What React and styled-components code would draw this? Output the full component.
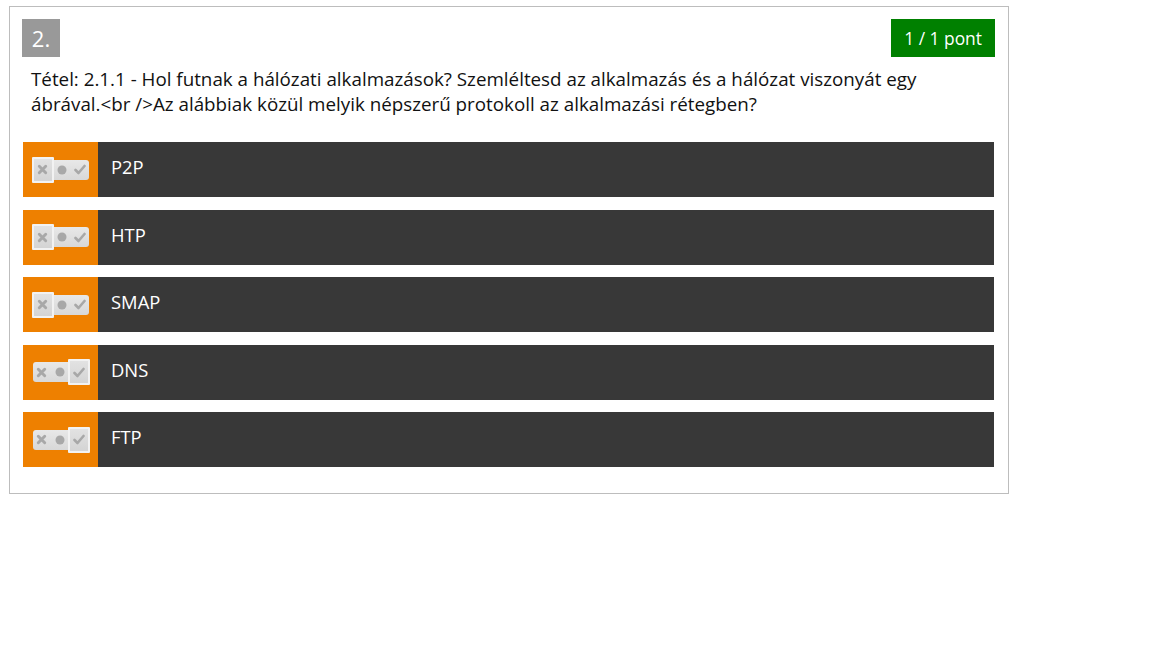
import React from "react";
import styled, { createGlobalStyle } from "styled-components";

const GlobalStyle = createGlobalStyle`
  body {
    margin: 0;
    background: #ffffff;
    font-family: "Open Sans", "Liberation Sans", sans-serif;
  }
`;

const Page = styled.div`
  padding: 6px 9px;
`;

const Card = styled.div`
  box-sizing: border-box;
  width: 1000px;
  height: 488px;
  border: 1px solid #bdbdbd;
  padding: 12px;
`;

const Header = styled.div`
  display: flex;
  justify-content: space-between;
  align-items: flex-start;
`;

const NumberBadge = styled.div`
  width: 38px;
  height: 38px;
  background: #999999;
  color: #ffffff;
  font-size: 22px;
  line-height: 38px;
  text-align: center;
`;

const ScoreBadge = styled.div`
  height: 38px;
  padding: 0 13px;
  margin-right: 1px;
  background: #008000;
  color: #ffffff;
  font-size: 17.4px;
  line-height: 38px;
`;

const Question = styled.div`
  padding: 10px 30px 0 9px;
  font-size: 18.8px;
  line-height: 25px;
  color: #111111;
`;

const Answers = styled.div`
  display: flex;
  flex-direction: column;
  gap: 12.5px;
  margin: 25px 2px 0 1px;
`;

const Row = styled.div`
  display: flex;
  height: 55px;
  background: #383838;
`;

const SwitchCell = styled.div`
  width: 75px;
  background: #ee8000;
  display: flex;
  align-items: center;
  justify-content: center;
`;

const Pill = styled.div`
  display: flex;
  align-items: center;
  width: 56px;
  height: 20px;
  border-radius: 3px;
  background: linear-gradient(#e8e8e8, #d8d8d8);
`;

const Slot = styled.div`
  flex: 1;
  height: 20px;
  display: flex;
  align-items: center;
  justify-content: center;
  box-sizing: border-box;
  ${(p) =>
    p.$active &&
    `
    height: 26px;
    margin: 0 -1px;
    background: linear-gradient(#e2e2e2, #d4d4d4);
    border: 2px solid #f2f2f2;
    border-radius: 1px;
  `}
`;

const Label = styled.div`
  padding: 0 0 6px 13px;
  display: flex;
  align-items: center;
  color: #ffffff;
  font-size: 18.4px;
`;

const Cross = () => (
  <svg width="11" height="11" viewBox="0 0 12 12">
    <path d="M2.5 2.5 L9.5 9.5 M9.5 2.5 L2.5 9.5" stroke="#a8a8a8" strokeWidth="3.2" strokeLinecap="round" />
  </svg>
);

const Dot = () => (
  <svg width="10" height="10" viewBox="0 0 10 10">
    <circle cx="5" cy="5" r="4.5" fill="#a8a8a8" />
  </svg>
);

const Check = () => (
  <svg width="12" height="11" viewBox="0 0 12 11">
    <path d="M1.5 6 L4.5 9 L10.5 2" fill="none" stroke="#a8a8a8" strokeWidth="2.6" strokeLinecap="round" strokeLinejoin="round" />
  </svg>
);

const answers = [
  { text: "P2P", state: "no" },
  { text: "HTP", state: "no" },
  { text: "SMAP", state: "no" },
  { text: "DNS", state: "yes" },
  { text: "FTP", state: "yes" },
];

const Switch = ({ state }) => (
  <Pill>
    <Slot $active={state === "no"}>
      <Cross />
    </Slot>
    <Slot $active={state === "none"}>
      <Dot />
    </Slot>
    <Slot $active={state === "yes"}>
      <Check />
    </Slot>
  </Pill>
);

export default function App() {
  return (
    <>
      <GlobalStyle />
      <Page>
        <Card>
          <Header>
            <NumberBadge>2.</NumberBadge>
            <ScoreBadge>1 / 1 pont</ScoreBadge>
          </Header>
          <Question>
            Tétel: 2.1.1 - Hol futnak a hálózati alkalmazások? Szemléltesd az alkalmazás és a hálózat viszonyát egy
            ábrával.&lt;br /&gt;Az alábbiak közül melyik népszerű protokoll az alkalmazási rétegben?
          </Question>
          <Answers>
            {answers.map((a) => (
              <Row key={a.text}>
                <SwitchCell>
                  <Switch state={a.state} />
                </SwitchCell>
                <Label>{a.text}</Label>
              </Row>
            ))}
          </Answers>
        </Card>
      </Page>
    </>
  );
}
